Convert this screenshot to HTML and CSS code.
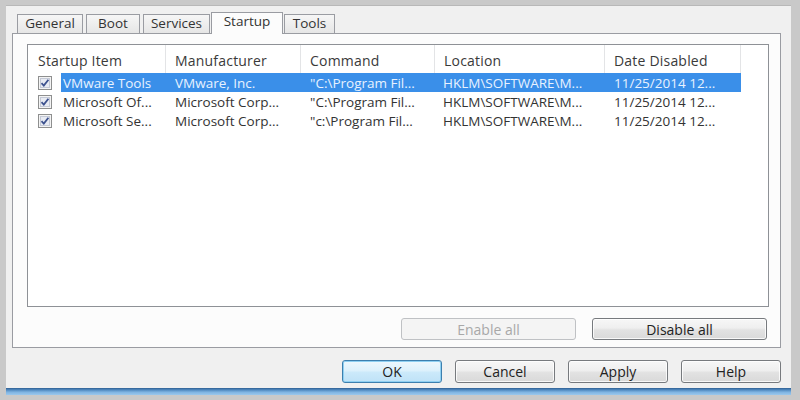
FILE: index.html
```html
<!DOCTYPE html>
<html>
<head>
<meta charset="utf-8">
<link rel="stylesheet" href="styles.css">
</head>
<body>
<div class="dialog">
  <div class="tabs">
    <div class="tab t-general">General</div>
    <div class="tab t-boot">Boot</div>
    <div class="tab t-services">Services</div>
    <div class="tab t-startup active">Startup</div>
    <div class="tab t-tools">Tools</div>
  </div>
  <div class="panel">
    <div class="list">
      <div class="header">
        <div class="hcell c1">Startup Item</div>
        <div class="hcell c2">Manufacturer</div>
        <div class="hcell c3">Command</div>
        <div class="hcell c4">Location</div>
        <div class="hcell c5">Date Disabled</div>
        <div class="hcell c6"></div>
      </div>
      <div class="row">
        <div class="chk"><svg width="14" height="14" viewBox="0 0 14 14"><rect x="0.5" y="0.5" width="13" height="13" fill="#f4f4f4" stroke="#8e8f8f"/><rect x="2.5" y="2.5" width="9" height="9" fill="#e8ebf3" stroke="#c4c9d6"/><path d="M3.5 7.2 L5.8 9.6 L10.4 3.8" fill="none" stroke="#3d528f" stroke-width="1.8"/></svg></div>
        <div class="cells selected">
          <div class="cell d1">VMware Tools</div>
          <div class="cell d2">VMware, Inc.</div>
          <div class="cell d3">"C:\Program Fil...</div>
          <div class="cell d4">HKLM\SOFTWARE\M...</div>
          <div class="cell d5">11/25/2014 12...</div>
        </div>
      </div>
      <div class="row">
        <div class="chk"><svg width="14" height="14" viewBox="0 0 14 14"><rect x="0.5" y="0.5" width="13" height="13" fill="#f4f4f4" stroke="#8e8f8f"/><rect x="2.5" y="2.5" width="9" height="9" fill="#e8ebf3" stroke="#c4c9d6"/><path d="M3.5 7.2 L5.8 9.6 L10.4 3.8" fill="none" stroke="#3d528f" stroke-width="1.8"/></svg></div>
        <div class="cells">
          <div class="cell d1">Microsoft Of...</div>
          <div class="cell d2">Microsoft Corp...</div>
          <div class="cell d3">"C:\Program Fil...</div>
          <div class="cell d4">HKLM\SOFTWARE\M...</div>
          <div class="cell d5">11/25/2014 12...</div>
        </div>
      </div>
      <div class="row">
        <div class="chk"><svg width="14" height="14" viewBox="0 0 14 14"><rect x="0.5" y="0.5" width="13" height="13" fill="#f4f4f4" stroke="#8e8f8f"/><rect x="2.5" y="2.5" width="9" height="9" fill="#e8ebf3" stroke="#c4c9d6"/><path d="M3.5 7.2 L5.8 9.6 L10.4 3.8" fill="none" stroke="#3d528f" stroke-width="1.8"/></svg></div>
        <div class="cells">
          <div class="cell d1">Microsoft Se...</div>
          <div class="cell d2">Microsoft Corp...</div>
          <div class="cell d3">"c:\Program Fil...</div>
          <div class="cell d4">HKLM\SOFTWARE\M...</div>
          <div class="cell d5">11/25/2014 12...</div>
        </div>
      </div>
    </div>
    <div class="list-buttons">
      <div class="btn wide disabled">Enable all</div>
      <div class="btn wide">Disable all</div>
    </div>
  </div>
  <div class="footer">
    <div class="btn std default">OK</div>
    <div class="btn std">Cancel</div>
    <div class="btn std">Apply</div>
    <div class="btn std">Help</div>
  </div>
</div>
<div class="taskbar"></div>
</body>
</html>
```

FILE: styles.css
```css
html, body {
  margin: 0;
  padding: 0;
}
body {
  width: 800px;
  height: 400px;
  background: #c9c9c9;
  padding: 5px 0 0 6px;
  box-sizing: border-box;
  font-family: "Open Sans", "Noto Sans", "DejaVu Sans", sans-serif;
  font-size: 13.5px;
  color: #333;
  overflow: hidden;
}
.dialog {
  width: 785px;
  height: 383px;
  box-sizing: border-box;
  background: #f0f0f0;
  border-top: 1px solid #b8b8b8;
  padding: 6px 10px 0 6px;
}
.tabs {
  display: flex;
  align-items: flex-end;
  height: 21px;
  padding-left: 5px;
  gap: 3px;
  position: relative;
  z-index: 2;
}
.tab {
  height: 19px;
  box-sizing: border-box;
  border: 1px solid #9a9ca2;
  border-bottom: none;
  background: linear-gradient(#f6f6f6, #e6e6e6);
  display: flex;
  align-items: center;
  justify-content: center;
  line-height: 1;
  color: #333;
  font-size: 13.5px;
}
.t-general { width: 66px; }
.t-boot { width: 54px; }
.t-services { width: 67px; }
.t-startup { width: 72px; }
.t-tools { width: 51px; }
.tab.active {
  height: 22px;
  margin: 0 -2px -1px;
  background: #fcfcfc;
  padding-bottom: 4px;
}
.panel {
  width: 769px;
  height: 315px;
  box-sizing: border-box;
  border: 1px solid #9a9ca2;
  background: #fcfcfc;
  padding: 10px 12px 0 14px;
  position: relative;
  z-index: 1;
}
.list {
  width: 742px;
  height: 263px;
  box-sizing: border-box;
  border: 1px solid #8e9196;
  background: #fff;
}
.header {
  display: flex;
  height: 28px;
}
.hcell {
  box-sizing: border-box;
  height: 28px;
  display: flex;
  align-items: center;
  border-right: 1px solid #e3e4e6;
  padding-left: 9px;
  padding-top: 2px;
  color: #3a3a3a;
  white-space: nowrap;
  font-size: 14px;
  letter-spacing: 0.2px;
}
.c1 { width: 138px; padding-left: 10px; }
.c2 { width: 135px; }
.c3 { width: 134px; }
.c4 { width: 170px; }
.c5 { width: 136px; }
.c6 { flex: 1; border-right: none; }
.row {
  display: flex;
  height: 19px;
}
.chk {
  width: 33px;
  box-sizing: border-box;
  padding-left: 10px;
  display: flex;
  align-items: center;
}
.chk svg { display: block; }
.cells {
  display: flex;
  height: 19px;
}
.cells.selected {
  background: #3a8fe9;
  color: #e8f2ff;
}
.cell {
  box-sizing: border-box;
  height: 19px;
  display: flex;
  align-items: center;
  padding-left: 9px;
  white-space: nowrap;
}
.d1 { width: 105px; padding-left: 2px; }
.d2 { width: 135px; }
.d3 { width: 134px; }
.d4 { width: 170px; padding-left: 8px; }
.d5 { width: 136px; }
.list-buttons {
  display: flex;
  justify-content: flex-end;
  gap: 16px;
  width: 740px;
  margin-top: 11px;
}
.btn {
  box-sizing: border-box;
  border: 1px solid #777a7e;
  border-radius: 3px;
  background: linear-gradient(#f7f7f7 0%, #efefef 45%, #e2e2e2 55%, #d9d9d9 100%);
  box-shadow: inset 0 0 0 1px rgba(255,255,255,0.8);
  display: flex;
  align-items: center;
  justify-content: center;
  color: #222;
  font-size: 14px;
}
.wide {
  width: 175px;
  height: 22px;
}
.btn.disabled {
  border-color: #bfc1c4;
  background: #f4f4f4;
  color: #a8a8a8;
  box-shadow: none;
}
.footer {
  display: flex;
  justify-content: flex-end;
  gap: 13px;
  margin-top: 12px;
  width: 769px;
}
.std {
  width: 100px;
  height: 23px;
}
.btn.default {
  border-color: #3d7fae;
  background: linear-gradient(#eef8fd 0%, #ddf1fc 45%, #cbe9fa 55%, #bfe2f7 100%);
  box-shadow: inset 0 0 0 1px #8fd0f2;
}
.taskbar {
  width: 785px;
  height: 7px;
  background: linear-gradient(#2f5f92 0%, #4d86bd 25%, #7fb4e2 60%, #9cc8ec 100%);
}
```
